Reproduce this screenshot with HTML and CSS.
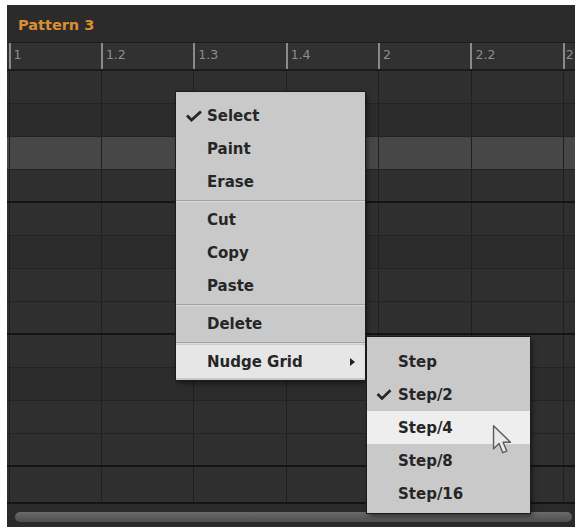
FILE: index.html
```html
<!DOCTYPE html>
<html>
<head>
<meta charset="utf-8">
<link rel="stylesheet" href="styles.css">
</head>
<body>
<div class="panel">
  <div class="header"><span class="title">Pattern 3</span></div>
  <div class="ruler">
    <div class="tick">1</div>
    <div class="tick">1.2</div>
    <div class="tick">1.3</div>
    <div class="tick">1.4</div>
    <div class="tick">2</div>
    <div class="tick">2.2</div>
    <div class="tick end">2</div>
  </div>
  <div class="grid">
    <div class="row"></div>
    <div class="row alt"></div>
    <div class="row hl"></div>
    <div class="row bar"></div>
    <div class="row"></div>
    <div class="row alt"></div>
    <div class="row"></div>
    <div class="row bar"></div>
    <div class="row"></div>
    <div class="row alt"></div>
    <div class="row"></div>
    <div class="row bar"></div>
    <div class="row last bar"></div>
  </div>
  <div class="scroll"><div class="thumb"></div></div>

  <div class="menu main">
    <div class="item"><span class="chk"><svg width="18" height="12" viewBox="0 0 18 12"><polyline points="2,5.5 6.5,10 16,1.5" fill="none" stroke="#262626" stroke-width="2.8"/></svg></span>Select</div>
    <div class="item"><span class="chk"></span>Paint</div>
    <div class="item"><span class="chk"></span>Erase</div>
    <div class="sep"></div>
    <div class="item"><span class="chk"></span>Cut</div>
    <div class="item"><span class="chk"></span>Copy</div>
    <div class="item"><span class="chk"></span>Paste</div>
    <div class="sep"></div>
    <div class="item"><span class="chk"></span>Delete</div>
    <div class="sep"></div>
    <div class="item hot"><span class="chk"></span>Nudge Grid<span class="arrow"></span></div>
  </div>

  <div class="menu sub">
    <div class="item"><span class="chk"></span>Step</div>
    <div class="item"><span class="chk"><svg width="16" height="11" viewBox="0 0 16 11"><polyline points="1.5,5 6,9.5 14.5,1.2" fill="none" stroke="#262626" stroke-width="2.6"/></svg></span>Step/2</div>
    <div class="item hot2"><span class="chk"></span>Step/4</div>
    <div class="item"><span class="chk"></span>Step/8</div>
    <div class="item"><span class="chk"></span>Step/16</div>
  </div>

  <svg class="cursor" width="20" height="31" viewBox="0 0 13 20">
    <path d="M1 1 L1 16 L4.6 12.6 L7 18.6 L9.6 17.5 L7.2 11.8 L12 11.8 Z" fill="#e9e9e9" stroke="#5a5a5a" stroke-width="0.9" stroke-linejoin="round"/>
  </svg>
</div>
</body>
</html>
```

FILE: styles.css
```css
body {
  margin: 0;
  background: #ffffff;
  font-family: "DejaVu Sans", "Liberation Sans", sans-serif;
}

.panel {
  position: relative;
  margin: 5px 0 0 7px;
  width: 568px;
  height: 522px;
  background: #2c2c2c;
  display: flex;
  flex-direction: column;
  overflow: hidden;
}

.header {
  height: 37px;
  flex: none;
  box-sizing: border-box;
  display: flex;
  align-items: center;
  padding: 2px 0 0 11px;
  background: #2b2b2b;
}

.title {
  color: #dc8e32;
  font-weight: bold;
  font-size: 14.5px;
}

.ruler {
  height: 29px;
  flex: none;
  box-sizing: border-box;
  display: flex;
  background: #313131;
  border-top: 1px solid #1b1b1b;
  border-bottom: 2px solid #1b1b1b;
  padding-left: 1.5px;
  overflow: hidden;
}

.tick {
  flex: none;
  width: 92.4px;
  box-sizing: border-box;
  border-left: 2px solid #8a8a8a;
  color: #8e8e8e;
  font-size: 12.5px;
  padding: 4px 0 0 3px;
}

.tick.end {
  width: 11px;
  padding-left: 1px;
}

.grid {
  flex: 1;
  display: flex;
  flex-direction: column;
}

.row {
  height: 33px;
  flex: none;
  box-sizing: border-box;
  border-bottom: 1px solid #232323;
  background-color: #2f2f2f;
  background-image: repeating-linear-gradient(90deg, transparent 0 1.6px, #1f1f1f 1.6px 2.6px, transparent 2.6px 92.4px);
}

.row.alt {
  background-color: #2c2c2c;
}

.row.hl {
  background-color: #474747;
}

.row.bar {
  border-bottom: 2px solid #141414;
}

.row.last {
  flex: 1;
}

.scroll {
  height: 23px;
  flex: none;
  box-sizing: border-box;
  display: flex;
  align-items: flex-start;
  padding: 8px 3px 0 8px;
  background: #2a2a2a;
}

.thumb {
  flex: 1;
  height: 10px;
  border-radius: 5px;
  background: linear-gradient(#6a6a6a, #4e4e4e);
}

.menu {
  position: absolute;
  background: #c9c9c9;
  box-shadow: 0 0 0 1px #1c1c1c, 2px 3px 5px rgba(0, 0, 0, 0.55);
}

.menu.main {
  left: 169px;
  top: 87px;
  width: 189px;
  padding: 7px 0 2px;
}

.menu.sub {
  left: 360px;
  top: 332px;
  width: 163px;
  padding: 8px 0 3px;
}

.item {
  display: flex;
  align-items: center;
  height: 33px;
  padding: 0 10px 0 9px;
  font-size: 15px;
  font-weight: bold;
  color: #262626;
}

.item.hot {
  background: #e6e6e6;
}

.item.hot2 {
  background: #eeeeee;
}

.chk {
  width: 22px;
  flex: none;
  display: flex;
  align-items: center;
}

.arrow {
  margin-left: auto;
  width: 0;
  height: 0;
  border-left: 5px solid #222;
  border-top: 4px solid transparent;
  border-bottom: 4px solid transparent;
}

.sep {
  height: 5px;
  background: linear-gradient(transparent 2px, #a2a2a2 2px 3px, #dcdcdc 3px 4px, transparent 4px);
}

.cursor {
  position: absolute;
  left: 485px;
  top: 419px;
}
```
